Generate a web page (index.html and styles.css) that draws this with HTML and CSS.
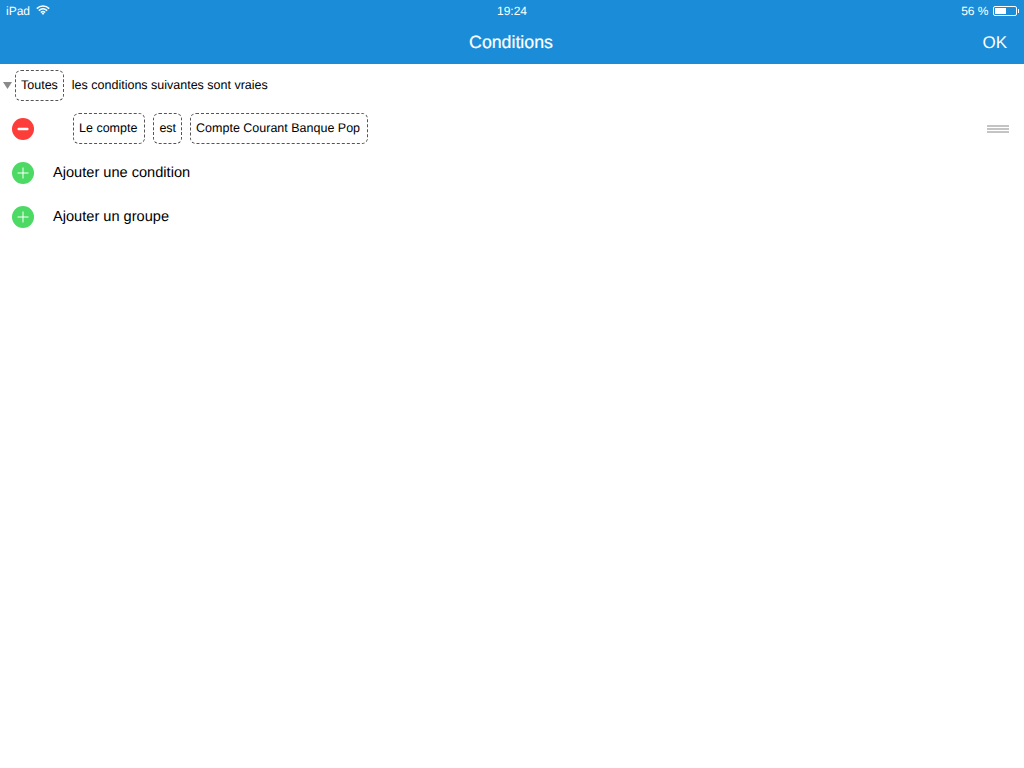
FILE: index.html
```html
<!DOCTYPE html>
<html lang="fr">
<head>
<meta charset="utf-8">
<title>Conditions</title>
<link rel="stylesheet" href="styles.css">
</head>
<body>
<header class="header">
  <div class="status">
    <div class="status-left">
      <span>iPad</span>
      <svg class="wifi" width="14" height="10" viewBox="0 0 14 10"><path d="M.8 3.600C4.400.200 9.600.200 13.200 3.600M2.800 5.600c2.500-2.200 5.900-2.200 8.400 0M4.800 7.500c1.300-1.100 3.100-1.100 4.400 0" fill="none" stroke="#fff" stroke-width="1.500"/><path d="M7 10 5.600 8.300c.8-.6 2-.6 2.800 0z" fill="#fff"/></svg>
    </div>
    <div class="status-time">19:24</div>
    <div class="status-right">
      <span>56 %</span>
      <div class="battery"><div class="battery-level"></div></div>
      <div class="battery-tip"></div>
    </div>
  </div>
  <div class="nav">
    <div class="nav-title">Conditions</div>
    <div class="nav-ok">OK</div>
  </div>
</header>
<main>
  <div class="row-group">
    <svg class="disclosure" width="9" height="7" viewBox="0 0 9 7"><path d="M0 0h9L4.500 7z" fill="#8a8a8a"/></svg>
    <span class="pill pill-narrow">Toutes</span>
    <span class="group-label">les conditions suivantes sont vraies</span>
  </div>
  <div class="row-condition">
    <svg class="round" width="22" height="22" viewBox="0 0 22 22"><circle cx="11" cy="11" r="11" fill="#fc3d39"/><rect x="5.500" y="9.800" width="11" height="2.400" rx="1" fill="#fff"/></svg>
    <div class="pills">
      <span class="pill pill-wide">Le compte</span>
      <span class="pill pill-narrow">est</span>
      <span class="pill pill-wide">Compte Courant Banque Pop</span>
    </div>
    <div class="grip"><i></i><i></i><i></i></div>
  </div>
  <div class="row-add">
    <svg class="round" width="22" height="22" viewBox="0 0 22 22"><circle cx="11" cy="11" r="11" fill="#4cd964"/><path d="M11 5.500v11M5.500 11h11" stroke="#fff" stroke-width="1"/></svg>
    <span>Ajouter une condition</span>
  </div>
  <div class="row-add">
    <svg class="round" width="22" height="22" viewBox="0 0 22 22"><circle cx="11" cy="11" r="11" fill="#4cd964"/><path d="M11 5.500v11M5.500 11h11" stroke="#fff" stroke-width="1"/></svg>
    <span>Ajouter un groupe</span>
  </div>
</main>
</body>
</html>
```
FILE: styles.css
```css
* { box-sizing: border-box; }
html, body { margin: 0; padding: 0; background: #fff; }
body {
  width: 1024px;
  height: 768px;
  overflow: hidden;
  font-family: "Liberation Sans", Arial, sans-serif;
  text-rendering: geometricPrecision;
  color: #000;
}
.header { height: 64px; background: #1a8cd8; color: #fff; }
.status {
  height: 20px;
  padding: 1px 6px 0;
  display: grid;
  grid-template-columns: 1fr auto 1fr;
  align-items: center;
  font-size: 12px;
}
.status-left { display: flex; align-items: center; gap: 6px; }
.wifi { margin-top: -2px; }
.status-right { display: flex; align-items: center; justify-content: flex-end; }
.status-right span { margin-right: 4px; }
.battery {
  width: 24px;
  height: 10px;
  border: 1px solid #fff;
  border-radius: 2px;
  padding: 1px;
}
.battery-level { width: 55%; height: 100%; background: #fff; }
.battery-tip { width: 1.5px; height: 4px; margin-left: 1px; background: #fff; margin-right: -1px; }
.nav {
  height: 44px;
  display: flex;
  align-items: center;
  justify-content: center;
  position: relative;
}
.nav-title { font-size: 17.750px; font-weight: 400; -webkit-text-stroke: 0.2px #fff; padding: 1px 2px 0 0; }
.nav-ok {
  position: absolute;
  right: 17px;
  top: 13px;
  font-size: 17px;
}
.pill {
  display: flex;
  align-items: center;
  height: 31px;
  padding: 0 6px 2px 5px;
  border: 1px dashed #555;
  border-radius: 6px;
  font-size: 12.500px;
  white-space: nowrap;
}
.pill-narrow { padding-right: 5px; }
.pill-wide { padding-right: 7px; }
.row-group {
  height: 43px;
  display: flex;
  align-items: center;
  padding-left: 3px;
}
.disclosure { margin-right: 3px; }
.group-label { margin-left: 8px; margin-bottom: 2px; font-size: 12.500px; }
.row-condition {
  height: 43px;
  display: flex;
  align-items: center;
  padding: 0 15px 0 12px;
}
.pills { display: flex; gap: 8px; margin-left: 39px; flex: 1; }
.grip { width: 22px; display: flex; flex-direction: column; gap: 1px; }
.grip i { display: block; height: 2px; background: #c4c4c4; }
.row-add {
  height: 44px;
  display: flex;
  align-items: center;
  padding: 1px 0 0 12px;
  font-size: 14.600px;
}
.row-add span { margin-left: 19px; }
```
